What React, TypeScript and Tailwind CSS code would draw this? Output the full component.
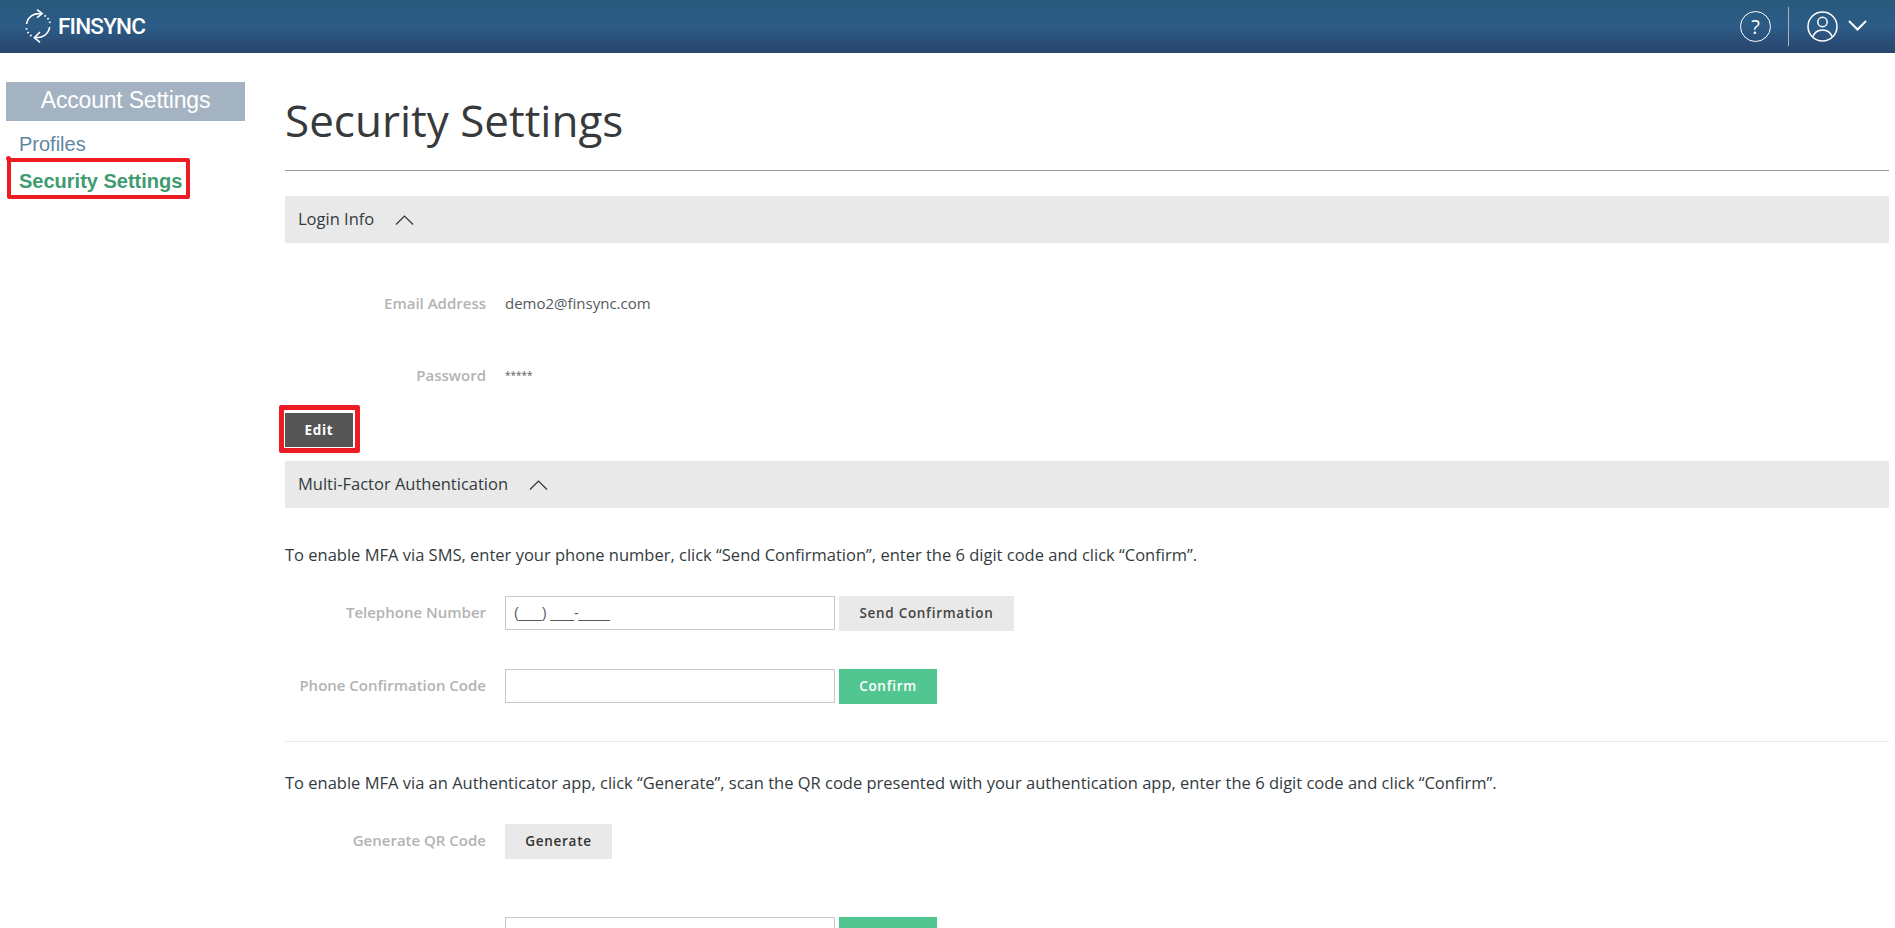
import { ReactNode } from 'react';

function Logo() {
  return (
    <svg width="30" height="36" viewBox="0 0 30 36" fill="none" stroke="white" strokeWidth="1.6" className="shrink-0">
      {/* solid arcs */}
      <path d="M2.6 15 A12 12 0 0 1 17.5 5" />
      <path d="M25.6 18 A12 12 0 0 1 11 28.2" />
      {/* dotted arcs */}
      <path d="M20.5 6.5 A12 12 0 0 1 26 14" strokeWidth="1.8" strokeDasharray="1.6 2.4" />
      <path d="M7.5 27 A12 12 0 0 1 2.4 19" strokeWidth="1.8" strokeDasharray="1.6 2.4" />
      {/* arrow heads */}
      <path d="M13 0.7 L18.2 4.6 L13 8.6" />
      <path d="M16 23 L10.4 28.6 L16 33.4" />
    </svg>
  );
}

function SectionBar({ title }: { title: string }) {
  return (
    <div className="flex h-[47px] items-center gap-[21px] bg-[#e9e9e9] pl-[13px] text-[16.5px] text-[#333b40]">
      <span>{title}</span>
      <svg width="19" height="10" viewBox="0 0 19 10" fill="none" stroke="#333" strokeWidth="1.2">
        <path d="M1 9.5 L9.5 1 L18 9.5" />
      </svg>
    </div>
  );
}

function Row({ label, children, className, labelClass }: { label: string; children: ReactNode; className?: string; labelClass?: string }) {
  return (
    <div className={`flex items-center ${className ?? ''}`}>
      <div className={`w-[201px] text-right text-[15px] font-semibold text-[#b3b3b3] ${labelClass ?? ''}`}>{label}</div>
      <div className="ml-[19px] flex items-start">{children}</div>
    </div>
  );
}

function Btn({ children, color, className }: { children: ReactNode; color: string; className?: string }) {
  return (
    <button className={`flex h-[35px] items-center justify-center text-[13.5px] font-semibold tracking-[0.7px] ${color} ${className ?? ''}`}>
      {children}
    </button>
  );
}

export default function App() {
  return (
    <div className="flex h-[928px] w-full flex-col overflow-hidden bg-white font-['Open_Sans',sans-serif]">
      {/* Header */}
      <header className="flex h-[53px] shrink-0 items-center justify-between bg-gradient-to-b from-[#28597c] via-[#2c5c86] to-[#28446c] pl-[24px] pr-[28px]">
        <div className="flex items-center gap-[4px]">
          <Logo />
          <span className="font-['Roboto',sans-serif] text-[22.5px] font-medium tracking-[-0.8px] text-white">FINSYNC</span>
        </div>
        <div className="flex items-center text-white">
          <div className="flex h-[31px] w-[31px] items-center justify-center rounded-full border-[1.5px] border-white text-[20px] font-normal leading-none">?</div>
          <div className="ml-[17px] mr-[18px] h-[39px] w-px bg-[#a9b4bf]" />
          <svg width="31" height="31" viewBox="0 0 31 31" fill="none" stroke="white" strokeWidth="1.5">
            <circle cx="15.5" cy="15.5" r="14.5" />
            <circle cx="15.5" cy="11" r="4.7" />
            <path d="M5.5 26 C8 20 12 19 15.5 19 C19 19 23 20 25.5 26" />
          </svg>
          <svg className="mb-[3px] ml-[10px]" width="19" height="11" viewBox="0 0 19 11" fill="none" stroke="white" strokeWidth="2">
            <path d="M1 1 L9.5 9.5 L18 1" />
          </svg>
        </div>
      </header>

      <div className="flex min-h-0 flex-1">
        {/* Sidebar */}
        <aside className="w-[285px] shrink-0 pl-[6px] pt-[29px] font-['Liberation_Sans',sans-serif]">
          <div className="flex h-[39px] w-[239px] items-center justify-center bg-[#a4b3c2] pb-[2px] text-[23px] tracking-[-0.2px] text-white">
            Account Settings
          </div>
          <div className="pl-[13px] pt-[11px] text-[20px] leading-[24px] text-[#5e87a0]">Profiles</div>
          <div className="relative pl-[13px] pt-[13px] text-[20px] font-bold leading-[24px] text-[#419b70]">
            Security Settings
            <div className="absolute left-[1px] top-[2px] h-[41px] w-[183px] rounded-[2px] border-[4px] border-[#ed1c24]" />
            <div className="absolute left-0 top-0 h-[5px] w-[5px] rounded-full bg-[#ed1c24]" />
          </div>
        </aside>

        {/* Main */}
        <main className="w-[1604px] shrink-0">
          <h1 className="pb-[18px] pt-[35px] text-[44px] font-medium leading-[64px] text-[#38393b]">Security Settings</h1>
          <div className="h-px bg-[#9b9b9b]" />

          <div className="mt-[25px]">
            <SectionBar title="Login Info" />
          </div>
          <Row label="Email Address" className="mt-[46px] h-[28px]">
            <span className="text-[15px] text-[#55595c]">demo2@finsync.com</span>
          </Row>
          <Row label="Password" className="mt-[44px] h-[28px]">
            <span className="text-[10px] text-[#55595c]">*****</span>
          </Row>
          <div className="relative mb-[8px] ml-[-6px] mt-[16px] h-[48px] w-[81px]">
            <div className="absolute left-[6px] top-[8px] flex h-[34px] w-[68px] items-center justify-center bg-[#555555] text-[13.5px] font-bold tracking-[0.7px] text-white">
              Edit
            </div>
            <div className="absolute inset-0 rounded-[2px] border-[5px] border-[#ed1c24]" />
          </div>

          <SectionBar title="Multi-Factor Authentication" />
          <p className="mt-[36px] text-[16.5px] leading-[22px] text-[#333b40]">
            To enable MFA via SMS, enter your phone number, click “Send Confirmation”, enter the 6 digit code and click “Confirm”.
          </p>
          <Row label="Telephone Number" labelClass="pb-[2px]" className="mt-[30px]">
            <div className="flex h-[34px] w-[330px] items-center border border-[#c8c8c8] pl-[8px] font-['Liberation_Sans',sans-serif] text-[14px] text-[#55595c]">(___) ___-____</div>
            <Btn color="bg-[#e9e9e9] text-[#444444]" className="ml-[4px] w-[175px]">Send Confirmation</Btn>
          </Row>
          <Row label="Phone Confirmation Code" labelClass="pb-[2px]" className="mt-[38px]">
            <div className="h-[34px] w-[330px] border border-[#c8c8c8]" />
            <Btn color="bg-[#52c690] text-white" className="ml-[4px] w-[98px]">Confirm</Btn>
          </Row>
          <div className="mt-[37px] h-px bg-[#e9e9e9]" />
          <p className="mt-[30px] text-[16.5px] leading-[22px] text-[#333b40]">
            To enable MFA via an Authenticator app, click “Generate”, scan the QR code presented with your authentication app, enter the 6 digit code and click “Confirm”.
          </p>
          <Row label="Generate QR Code" labelClass="pb-[2px]" className="mt-[30px]">
            <Btn color="bg-[#e9e9e9] text-[#333333]" className="w-[107px]">Generate</Btn>
          </Row>
          <div className="ml-[220px] mt-[58px] flex items-start">
            <div className="h-[34px] w-[330px] border border-[#c8c8c8]" />
            <Btn color="bg-[#52c690] text-white" className="ml-[4px] w-[98px]">Confirm</Btn>
          </div>
        </main>
      </div>
    </div>
  );
}
